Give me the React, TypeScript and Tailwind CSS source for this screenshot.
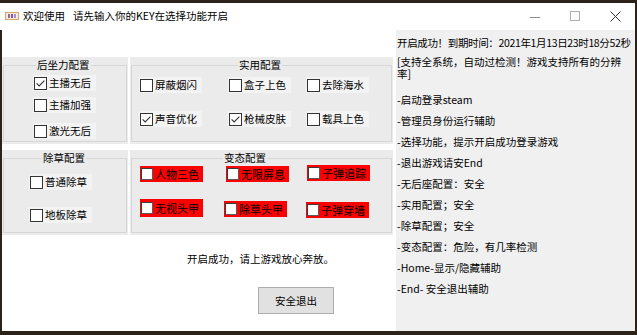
import { ReactNode } from "react";

function Box({ checked }: { checked?: boolean }) {
  return (
    <span className="w-[13px] h-[13px] border border-[#333333] bg-white flex items-center justify-center shrink-0">
      {checked && (
        <svg width="11" height="11" viewBox="0 0 11 11">
          <path d="M1.6 5.4 L4.2 8 L9.4 2.6" fill="none" stroke="#333333" strokeWidth="1.1" />
        </svg>
      )}
    </span>
  );
}

function Option({ label, checked, className = "" }: { label: string; checked?: boolean; className?: string }) {
  return (
    <div className={`flex items-center h-[16px] bg-[#f3f3f3] pl-[1px] pr-[5px] gap-[2px] w-fit ${className}`}>
      <Box checked={checked} />
      <span className="text-[10.5px] leading-[16px] text-black">{label}</span>
    </div>
  );
}

function RedOption({ label, className = "" }: { label: string; className?: string }) {
  return (
    <div className={`flex items-center w-[63px] h-[16px] bg-[#ff0000] pl-[1px] gap-[2px] ${className}`}>
      <span className="w-[12px] h-[12px] bg-white border border-[#5a5a5a] border-t-[#3c3c3c] border-l-[#3c3c3c] shrink-0" />
      <span className="text-[11px] leading-[16px] text-black">{label}</span>
    </div>
  );
}

function Group({
  title,
  legendClass,
  className,
  children,
}: {
  title: string;
  legendClass: string;
  className: string;
  children: ReactNode;
}) {
  return (
    <div className={`bg-[#ebebeb] px-[1px] pb-[2px] ${className}`}>
      <fieldset className="h-full border border-[#d7d7d7] m-0 p-0 min-w-0">
        <legend className={`px-[1px] text-[10.5px] leading-[16px] text-black ${legendClass}`}>{title}</legend>
        {children}
      </fieldset>
    </div>
  );
}

const infoLines = [
  "-启动登录steam",
  "-管理员身份运行辅助",
  "-选择功能，提示开启成功登录游戏",
  "-退出游戏请安End",
  "-无后座配置：安全",
  "-实用配置；安全",
  "-除草配置；安全",
  "-变态配置：危险，有几率检测",
  "-Home-显示/隐藏辅助",
  "-End- 安全退出辅助",
];

export default function App() {
  return (
    <div className="w-[637px] h-[335px] bg-[#2b2219] pt-[3px] overflow-hidden font-['Noto_Sans_CJK_SC',sans-serif]">
      <div className="w-[635px] h-[328px] bg-white flex flex-col">
        {/* title bar */}
        <div className="h-[27px] flex items-center shrink-0">
          <svg width="14" height="8" viewBox="0 0 14 8" className="ml-[5px] mt-[-2px]">
            <rect x="0.5" y="0.5" width="13" height="7" fill="#f6ead8" stroke="#d6a56a" />
            <rect x="3" y="2" width="2" height="4" fill="#8a6bb8" />
            <rect x="6" y="2" width="2" height="4" fill="#7a5aa8" />
            <rect x="9" y="2" width="2" height="4" fill="#b08ad0" />
          </svg>
          <span className="ml-[4px] text-[10.5px] text-black leading-[14px] mt-[-2px]">欢迎使用</span>
          <span className="ml-[8px] text-[10.5px] text-black leading-[14px] mt-[-2px]">请先输入你的KEY在选择功能开启</span>
          <div className="ml-auto flex h-full">
            <div className="w-[40px] flex items-center justify-center">
              <span className="w-[10px] h-[1px] bg-[#8a8a8a] mt-[1px]" />
            </div>
            <div className="w-[40px] flex items-center justify-center">
              <span className="w-[10px] h-[10px] border border-[#b0b0b0] mt-[-1px]" />
            </div>
            <div className="w-[40px] flex items-center justify-center">
              <svg width="11" height="11" viewBox="0 0 11 11" className="mt-[-1px]">
                <path d="M0.5 0.5 L10.5 10.5 M10.5 0.5 L0.5 10.5" stroke="#333333" strokeWidth="1" />
              </svg>
            </div>
          </div>
        </div>

        {/* body */}
        <div className="flex-1 flex border-l-2 border-[#2b2219]">
          <div className="w-[394px] pt-[27px] flex flex-col">
            <div className="flex gap-[2px]">
              <Group title="后坐力配置" legendClass="ml-[32px]" className="w-[126px] h-[87px]">
                <div className="flex flex-col pl-[29px]">
                  <Option label="主播无后" checked className="mt-[2px]" />
                  <Option label="主播加强" className="mt-[6px]" />
                  <Option label="激光无后" className="mt-[10px]" />
                </div>
              </Group>
              <Group title="实用配置" legendClass="ml-[106px]" className="w-[263px] h-[87px]">
                <div className="grid grid-cols-[89px_78px_70px] pl-[7px] pt-[4px] gap-y-[18px]">
                  <Option label="屏蔽烟闪" />
                  <Option label="盒子上色" />
                  <Option label="去除海水" />
                  <Option label="声音优化" checked />
                  <Option label="枪械皮肤" checked />
                  <Option label="载具上色" />
                </div>
              </Group>
            </div>

            <div className="flex gap-[2px] mt-[6px]">
              <Group title="除草配置" legendClass="ml-[38px]" className="w-[126px] h-[85px]">
                <div className="flex flex-col pl-[25px]">
                  <Option label="普通除草" className="mt-[8px]" />
                  <Option label="地板除草" className="mt-[17px]" />
                </div>
              </Group>
              <Group title="变态配置" legendClass="ml-[91px]" className="w-[263px] h-[85px]">
                <div className="grid grid-cols-[86px_81px_64px] pl-[8px]">
                  <RedOption label="人物三色" />
                  <RedOption label="无限屏息" />
                  <RedOption label="子弹追踪" className="mt-[-1px]" />
                  <RedOption label="无视头甲" className="mt-[17px] h-[18px]" />
                  <RedOption label="除草头甲" className="mt-[19px] ml-[-2px]" />
                  <RedOption label="子弹穿墙" className="mt-[20px] ml-[-1px]" />
                </div>
              </Group>
            </div>

            <div className="ml-[185px] mt-[17px] text-[10.5px] leading-[14px] text-black">
              开启成功，请上游戏放心奔放。
            </div>
            <button className="ml-[256px] mt-[21px] w-[76px] h-[27px] bg-[#e1e1e1] border border-[#adadad] text-[10.5px] text-black flex items-center justify-center">
              安全退出
            </button>
          </div>

          {/* info panel */}
          <div className="flex-1 bg-[#f0f0f0] pl-[1px] pt-[6px] text-[10.5px] text-black overflow-hidden">
            <div className="leading-[14px] whitespace-nowrap tracking-[-0.35px]">开启成功！到期时间：2021年1月13日23时18分52秒</div>
            <div className="leading-[12px] mt-[6px]">
              <div className="whitespace-nowrap">[支持全系统，自动过检测！游戏支持所有的分辨</div>
              <div>率]</div>
            </div>
            <div className="mt-[9px]">
              {infoLines.map((line) => (
                <div key={line} className="h-[21px] leading-[21px] whitespace-nowrap">
                  {line}
                </div>
              ))}
            </div>
          </div>
        </div>
      </div>
    </div>
  );
}
